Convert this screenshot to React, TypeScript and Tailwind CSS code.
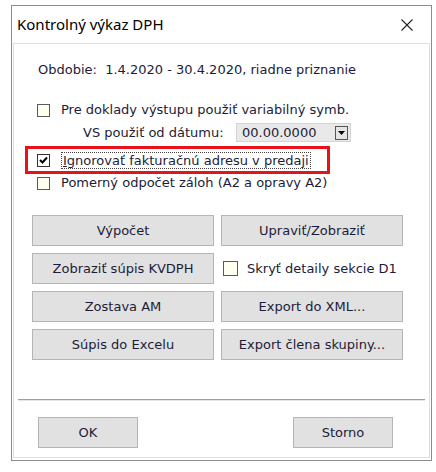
import React from 'react';

const font = { fontFamily: '"DejaVu Sans", Tahoma, sans-serif' };

const Box = ({ checked = false }: { checked?: boolean }) => (
  <span
    className={`flex h-[13px] w-[13px] shrink-0 items-center justify-center border ${
      checked ? 'border-[#333333] bg-white' : 'border-[#5a5a5a] bg-[#fffff0]'
    }`}
  >
    {checked && (
      <svg width="9" height="8" viewBox="0 0 9 8">
        <path d="M1 4 L3.5 6.5 L8 1.5" stroke="#000" strokeWidth="2" fill="none" />
      </svg>
    )}
  </span>
);

const Btn = ({ label, className = '' }: { label: string; className?: string }) => (
  <button
    className={`flex h-[31px] items-center justify-center border border-[#b5b5b5] bg-[#e1e1e1] text-[13px] text-[#1c1c38] ${className}`}
  >
    {label}
  </button>
);

export default function App() {
  return (
    <div className="h-[472px] w-[436px] bg-white pl-[11px] pt-[5px]" style={font}>
      <div className="flex h-[456px] w-[421px] flex-col border border-[#8c8c8c] bg-white">
        {/* title bar */}
        <div className="flex h-[37px] shrink-0 items-center justify-between pl-[5px] pr-[18px]">
          <span className="text-[15px] text-black" style={{ fontFamily: '"Noto Sans", sans-serif' }}>
            Kontrolný výkaz DPH
          </span>
          <svg width="12" height="12" viewBox="0 0 12 12">
            <path d="M0.5 0.5 L11.5 11.5 M11.5 0.5 L0.5 11.5" stroke="#222" strokeWidth="1.1" />
          </svg>
        </div>

        <div className="mx-[1px] mb-[2px] flex flex-1 flex-col border border-[#dedede] text-[13px] leading-[16px] text-[#1c1c38]">
          <div className="ml-[24px] mt-[18px]">Obdobie:&nbsp; 1.4.2020 - 30.4.2020, riadne priznanie</div>

          <div className="ml-[23px] mt-[24px] flex items-center gap-[11px]">
            <Box />
            <span>Pre doklady výstupu použiť variabilný symb.</span>
          </div>

          <div className="ml-[69px] mt-[5px] flex items-center">
            <span className="w-[153px]">VS použiť od dátumu:</span>
            <div className="flex h-[19px] w-[115px] items-center justify-between border border-[#d4d4d4] bg-[#e9e9e9] pl-[5px] pr-[2px]">
              <span>00.00.0000</span>
              <span className="flex h-[14px] w-[13px] items-center justify-center border border-[#555] bg-[#e4e4e4]">
                <svg width="7" height="4" viewBox="0 0 7 4">
                  <path d="M0 0 H7 L3.5 4 Z" fill="#000" />
                </svg>
              </span>
            </div>
          </div>

          <div className="ml-[11px] mt-[4px] flex h-[28px] w-[305px] items-center gap-[11px] border-[3px] border-[#e8131a] pl-[9px]">
            <Box checked />
            <span className="border border-dotted border-[#444] px-[1px] leading-[15px]">
              <span className="underline">I</span>gnorovať fakturačnú adresu v predaji
            </span>
          </div>

          <div className="ml-[23px] mt-[1px] flex items-center gap-[11px]">
            <Box />
            <span>Pomerný odpočet záloh (A2 a opravy A2)</span>
          </div>

          <div className="ml-[18px] mt-[24px] grid w-[372px] grid-cols-[182px_182px] gap-x-[7px] gap-y-[7px]">
            <Btn label="Výpočet" />
            <Btn label="Upraviť/Zobraziť" />
            <Btn label="Zobraziť súpis KVDPH" />
            <div className="flex items-center gap-[9px] pl-[2px]">
              <span className="flex h-[15px] w-[15px] border border-[#5a5a5a] bg-[#fffff0]" />
              <span>Skryť detaily sekcie D1</span>
            </div>
            <Btn label="Zostava AM" />
            <Btn label="Export do XML..." />
            <Btn label="Súpis do Excelu" />
            <Btn label="Export člena skupiny..." />
          </div>

          <div className="mx-[4px] mt-[39px] h-[2px] border-t border-[#a0a0a0] bg-[#e6e6e6]" />

          <div className="mt-[16px] flex justify-between pl-[24px] pr-[36px]">
            <Btn label="OK" className="w-[100px]" />
            <Btn label="Storno" className="w-[100px]" />
          </div>
        </div>
      </div>
    </div>
  );
}
